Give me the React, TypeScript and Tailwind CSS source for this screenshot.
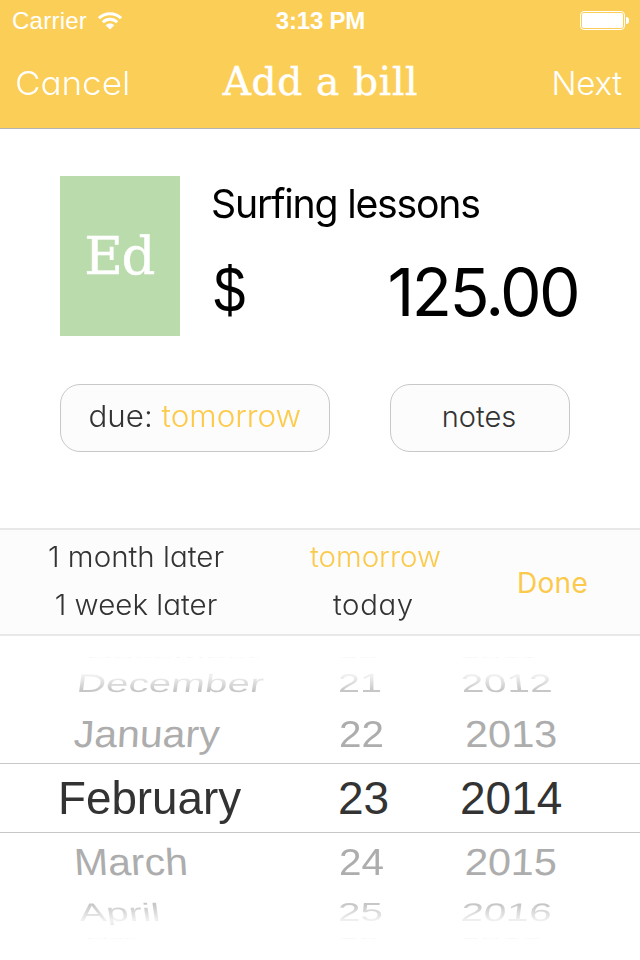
import React from "react";

const GOTHIC = "font-['Century_Gothic','URW_Gothic',Inter,sans-serif] [font-feature-settings:'cv11'] whitespace-nowrap";
const SLAB = "font-['DejaVu_Serif',serif] whitespace-nowrap [-webkit-text-stroke:0.5px_white]";
const HELV = "font-['Liberation_Sans',Arial,sans-serif] whitespace-nowrap";

function Wifi() {
  return (
    <svg className="ml-[11px] h-[18px] w-6" viewBox="0 0 24 18" fill="none" stroke="#fff" strokeWidth="3">
      <path d="M1 6.2C7 .4 17 .4 23 6.2" />
      <path d="M4.8 10.2C8.8 6.2 15.2 6.2 19.2 10.2" />
      <path d="M7.6 13.2C10.2 10.8 13.8 10.8 16.4 13.2L12 17.6Z" fill="#fff" stroke="none" />
    </svg>
  );
}

function Battery() {
  return (
    <div className="flex items-center gap-px">
      <div className="h-[19px] w-[45px] rounded-[4px] border border-white p-px">
        <div className="h-full w-full rounded-[2px] bg-white" />
      </div>
      <div className="h-[7px] w-[3px] rounded-r-full bg-white" />
    </div>
  );
}

function Header() {
  return (
    <header className="h-[129px] border-b border-[#b3b3b3] bg-[#fbcf57] text-white">
      <div className="grid h-10 grid-cols-3 items-center pr-[11px] pl-3">
        <div className="flex items-center">
          <span className={`${HELV} pt-px text-[24px] leading-10 tracking-[0.25px]`}>Carrier</span>
          <Wifi />
        </div>
        <span className={`${HELV} pt-px text-center text-[24px] leading-10 font-bold tracking-[-0.2px]`}>3:13 PM</span>
        <div className="flex justify-end">
          <Battery />
        </div>
      </div>
      <div className="grid h-[84px] grid-cols-[200px_240px_200px] items-center">
        <span className={`${GOTHIC} ml-[15px] origin-left scale-x-[1.06] pt-[3px] text-[33px] font-light`}>Cancel</span>
        <h1 className={`${SLAB} pl-px text-center text-[39px] tracking-[0.7px]`}>Add a bill</h1>
        <span className={`${GOTHIC} pt-[3px] pr-[18px] text-right text-[33px] font-light tracking-[-0.2px]`}>Next</span>
      </div>
    </header>
  );
}

function Bill() {
  return (
    <section className="flex h-[207px] pt-[47px] pl-[60px]">
      <div className="flex h-40 w-[120px] items-center justify-center bg-[#badbac] text-white">
        <span className={`${SLAB} pr-0.5 text-[53px] leading-[58px] tracking-[-1.5px]`}>Ed</span>
      </div>
      <div className="ml-8 w-[368px] text-black">
        <div className={`${GOTHIC} -ml-px w-max origin-left scale-x-[0.98] text-[40px] leading-[56px] tracking-[-1.25px]`}>Surfing lessons</div>
        <div className="mt-5 flex justify-between text-[66px] leading-[80px]">
          <span className={`${HELV} ml-0.5 origin-[0_75%] scale-x-[0.94] scale-y-[1.08] text-[60px]`}>$</span>
          <span className={`${GOTHIC} mr-0.5 tracking-[-2.6px]`}>125.00</span>
        </div>
      </div>
    </section>
  );
}

function Actions() {
  const pill = `${GOTHIC} flex h-[68px] items-center justify-center rounded-[20px] border border-[#c8c8c8] bg-[#fcfcfc] font-light text-[#333]`;
  return (
    <section className="flex h-[192px] gap-[60px] pt-12 pl-[60px]">
      <button className={`${pill} w-[270px] pb-1 text-[30px]`}>
        <span className="scale-x-[1.045] whitespace-pre">due: <span className="text-[#fdcb4b]">tomorrow</span></span>
      </button>
      <button className={`${pill} w-[180px] pr-0.5 pb-0.5 text-[29px]`}>notes</button>
    </section>
  );
}

function Shortcuts() {
  return (
    <section className={`${GOTHIC} grid h-[108px] grid-cols-[272px_207px_147px] border-y-2 border-[#e8e8e8] bg-[#fcfcfc] text-center text-[28px] font-light text-[#333]`}>
      <div className="scale-x-[1.055] pt-[3px] leading-[48px]">
        <div>1 month later</div>
        <div>1 week later</div>
      </div>
      <div className="scale-x-[1.05] pt-[3px] leading-[48px]">
        <div className="text-[#fbca4d]">tomorrow</div>
        <div className="pr-1 tracking-[0.6px]">today</div>
      </div>
      <div className="flex items-center justify-center pt-[2px] font-normal tracking-[0.3px] text-[#fbca4d]">Done</div>
    </section>
  );
}

const EDGE = "text-[#f6f6f6]";
const FADE_IN = "bg-linear-to-b from-[#efefef] from-25% to-[#c6c6c6] to-80% bg-clip-text text-transparent";
const FADE_OUT = "bg-linear-to-b from-[#c6c6c6] from-20% to-[#efefef] to-80% bg-clip-text text-transparent";

// One wheel row per entry. "warp" flattens each column (month, day, year)
// the way the cylinder turns away from the viewer.
const ROWS = [
  {
    row: "mt-[19px] h-[3px]",
    ink: EDGE,
    cells: ["November", "20", "2011"],
    warp: [
      "ml-[86px] scale-x-[0.82] scale-y-[0.05]",
      "ml-[338px] scale-x-[0.8] scale-y-[0.05]",
      "ml-[460px] scale-x-[0.8] scale-y-[0.05]",
    ],
  },
  {
    row: "h-[50px]",
    ink: FADE_IN,
    cells: ["December", "21", "2012"],
    warp: [
      "ml-[77px] scale-x-[0.88] scale-y-[0.55] -skew-x-[5deg]",
      "ml-[338px] scale-x-[0.86] scale-y-[0.55]",
      "ml-[461px] scale-x-[0.89] scale-y-[0.55] skew-x-[4deg]",
    ],
  },
  {
    row: "h-[55px] pb-1",
    ink: "text-[#adadad]",
    cells: ["January", "22", "2013"],
    warp: [
      "ml-[74px] scale-x-[0.89] scale-y-[0.82] -skew-x-[3deg]",
      "ml-[339px] scale-x-[0.88] scale-y-[0.82]",
      "ml-[465px] scale-x-[0.9] scale-y-[0.82] skew-x-[2deg]",
    ],
  },
  {
    row: "h-[70px] border-y border-[#c8c8c8]",
    ink: "text-[#333]",
    cells: ["February", "23", "2014"],
    warp: ["ml-[58px] scale-x-[0.995]", "ml-[338px]", "ml-[460px]"],
  },
  {
    row: "h-[58px] pb-px",
    ink: "text-[#adadad]",
    cells: ["March", "24", "2015"],
    warp: [
      "ml-[74px] scale-x-[0.89] scale-y-[0.82] skew-x-[3deg]",
      "ml-[339px] scale-x-[0.88] scale-y-[0.82]",
      "ml-[465px] scale-x-[0.9] scale-y-[0.82] -skew-x-[2deg]",
    ],
  },
  {
    row: "h-[44px] pb-[3px]",
    ink: FADE_OUT,
    cells: ["April", "25", "2016"],
    warp: [
      "ml-[79px] scale-x-[0.88] scale-y-[0.55] skew-x-[5deg]",
      "ml-[338px] scale-x-[0.88] scale-y-[0.55]",
      "ml-[461px] scale-x-[0.89] scale-y-[0.55] -skew-x-[4deg]",
    ],
  },
  {
    row: "mt-px h-[3px]",
    ink: EDGE,
    cells: ["May", "26", "2017"],
    warp: [
      "ml-[86px] scale-x-[0.6] scale-y-[0.05]",
      "ml-[338px] scale-x-[0.8] scale-y-[0.05]",
      "ml-[460px] scale-x-[0.8] scale-y-[0.05]",
    ],
  },
];

function Picker() {
  return (
    <section className={`${HELV} h-[324px] bg-white text-[46px] leading-[46px]`}>
      {ROWS.map((r) => (
        <div key={r.cells[0]} className={`grid content-center items-center ${r.row}`}>
          {r.cells.map((t, i) => (
            <span key={t} className={`col-start-1 row-start-1 w-max origin-left ${r.ink} ${r.warp[i]}`}>
              {t}
            </span>
          ))}
        </div>
      ))}
    </section>
  );
}

export default function App() {
  return (
    <main className="h-[960px] w-[640px] overflow-hidden bg-white">
      <Header />
      <Bill />
      <Actions />
      <Shortcuts />
      <Picker />
    </main>
  );
}
